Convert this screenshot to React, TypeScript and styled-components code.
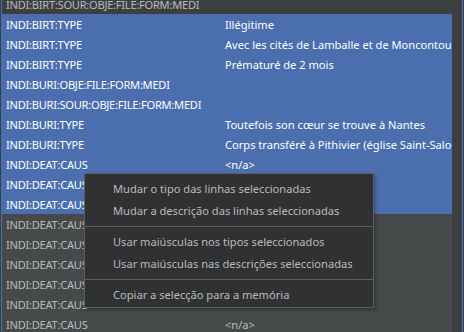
import React from 'react';
import styled, { createGlobalStyle } from 'styled-components';

const GlobalStyle = createGlobalStyle`
  html, body {
    margin: 0;
    padding: 0;
    background: #3c3f41;
    overflow: hidden;
  }
  body {
    font-family: 'Noto Sans', 'Open Sans', sans-serif;
    font-size: 11.1px;
  }
`;

type Row = { tag: string; value: string; selected?: boolean; dim?: boolean };

const rows: Row[] = [
  { tag: 'INDI:BIRT:SOUR:OBJE:FILE:FORM:MEDI', value: '', dim: true },
  { tag: 'INDI:BIRT:TYPE', value: 'Illégitime', selected: true },
  { tag: 'INDI:BIRT:TYPE', value: 'Avec les cités de Lamballe et de Moncontour', selected: true },
  { tag: 'INDI:BIRT:TYPE', value: 'Prématuré de 2 mois', selected: true },
  { tag: 'INDI:BURI:OBJE:FILE:FORM:MEDI', value: '', selected: true },
  { tag: 'INDI:BURI:SOUR:OBJE:FILE:FORM:MEDI', value: '', selected: true },
  { tag: 'INDI:BURI:TYPE', value: 'Toutefois son cœur se trouve à Nantes', selected: true },
  { tag: 'INDI:BURI:TYPE', value: 'Corps transféré à Pithivier (église Saint-Salomon)', selected: true },
  { tag: 'INDI:DEAT:CAUS', value: '<n/a>', selected: true },
  { tag: 'INDI:DEAT:CAUS', value: '', selected: true },
  { tag: 'INDI:DEAT:CAUS', value: '', selected: true },
  { tag: 'INDI:DEAT:CAUS', value: '' },
  { tag: 'INDI:DEAT:CAUS', value: '' },
  { tag: 'INDI:DEAT:CAUS', value: '' },
  { tag: 'INDI:DEAT:CAUS', value: '' },
  { tag: 'INDI:DEAT:CAUS', value: '' },
  { tag: 'INDI:DEAT:CAUS', value: '<n/a>' },
];

const menuItems: (string | null)[] = [
  'Mudar o tipo das linhas seleccionadas',
  'Mudar a descrição das linhas seleccionadas',
  null,
  'Usar maiúsculas nos tipos seleccionados',
  'Usar maiúsculas nas descrições seleccionadas',
  null,
  'Copiar a selecção para a memória',
];

const Frame = styled.div`
  position: relative;
  display: flex;
  height: 332px;
  margin: 0 1px;
  border-left: 1px solid #4b6eaf;
  border-right: 1px solid #4b6eaf;
  overflow: hidden;
`;

const Table = styled.div`
  flex: 1;
  overflow: hidden;
  background: #45494a;
`;

const Rows = styled.div`
  margin-top: -6px;
`;

const TableRow = styled.div<{ $selected?: boolean; $dim?: boolean }>`
  display: grid;
  grid-template-columns: 219px 1fr;
  height: 20px;
  align-items: center;
  background: ${p => (p.$selected ? '#4b6eaf' : p.$dim ? '#3c3f41' : '#45494a')};
  color: ${p => (p.$selected ? '#ffffff' : '#bbbbbb')};
`;

const Cell = styled.div<{ $tag?: boolean }>`
  padding: 0 4px;
  white-space: nowrap;
  overflow: hidden;
  letter-spacing: ${p => (p.$tag ? '-0.25px' : 'normal')};
`;

const ScrollTrack = styled.div`
  width: 10px;
  background: #3c3f41;
`;

const Menu = styled.div`
  position: absolute;
  left: 84px;
  top: 173px;
  width: 288px;
  padding: 4px 0 1px;
  background: #2f3133;
  border: 1px solid #5c5f61;
  box-shadow: 2px 2px 3px rgba(0, 0, 0, 0.25);
  color: #bbbbbb;
`;

const MenuItem = styled.div`
  height: 22px;
  line-height: 22px;
  padding-left: 28px;
  white-space: nowrap;
`;

const Separator = styled.div`
  height: 1px;
  margin: 4px 0;
  background: #5c5f61;
`;

export default function App() {
  return (
    <>
      <GlobalStyle />
      <Frame>
        <Table>
          <Rows>
            {rows.map((r, i) => (
              <TableRow key={i} $selected={r.selected} $dim={r.dim}>
                <Cell $tag>{r.tag}</Cell>
                <Cell>{r.value}</Cell>
              </TableRow>
            ))}
          </Rows>
        </Table>
        <ScrollTrack />
      </Frame>
      <Menu>
        {menuItems.map((m, i) =>
          m === null ? <Separator key={i} /> : <MenuItem key={i}>{m}</MenuItem>
        )}
      </Menu>
    </>
  );
}
